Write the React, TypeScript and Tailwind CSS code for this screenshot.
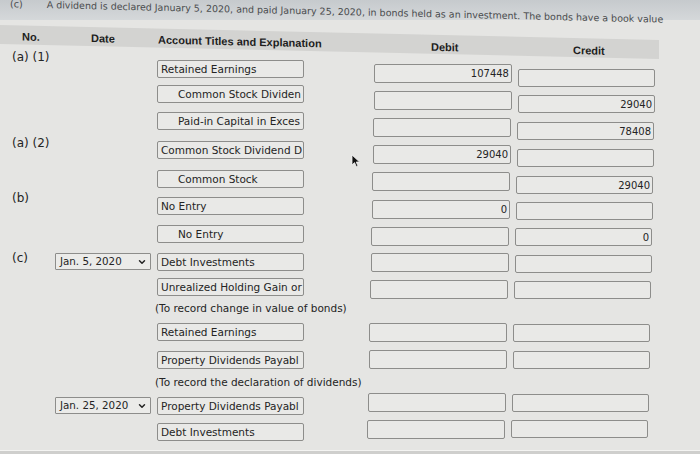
import React from "react";
import { ChevronDown } from "lucide-react";

type InputRow = {
  kind: "input";
  label?: string;
  labelCls?: string;
  date?: string;
  account: string;
  indent?: boolean;
  debit?: string;
  credit?: string;
  rowCls: string;
  debCls: string;
  credCls: string;
};
type TextRow = { kind: "text"; text: string; rowCls: string };
type Row = InputRow | TextRow;

const rows: Row[] = [
  { kind: "input", label: "(a) (1)", labelCls: "mt-[-10px]", account: "Retained Earnings", debit: "107448", rowCls: "h-[25px]", debCls: "ml-[70px] mt-[4px]", credCls: "mt-[9px]" },
  { kind: "input", account: "Common Stock Dividen", indent: true, credit: "29040", rowCls: "h-[27px]", debCls: "ml-[70px] mt-[6px]", credCls: "mt-[10px]" },
  { kind: "input", account: "Paid-in Capital in Exces", indent: true, credit: "78408", rowCls: "h-[29px]", debCls: "ml-[69px] mt-[6px]", credCls: "mt-[10px]" },
  { kind: "input", label: "(a) (2)", labelCls: "mt-[-5px]", account: "Common Stock Dividend D", debit: "29040", rowCls: "h-[29px]", debCls: "ml-[69px] mt-[4px]", credCls: "mt-[8px]" },
  { kind: "input", account: "Common Stock", indent: true, credit: "29040", rowCls: "h-[27px]", debCls: "ml-[68px] mt-[2px]", credCls: "mt-[6px]" },
  { kind: "input", label: "(b)", labelCls: "mt-[-6px]", account: "No Entry", debit: "0", rowCls: "h-[28px]", debCls: "ml-[68px] mt-[3px]", credCls: "mt-[5px]" },
  { kind: "input", account: "No Entry", indent: true, credit: "0", rowCls: "h-[28px]", debCls: "ml-[67px] mt-[2px]", credCls: "mt-[3px]" },
  { kind: "input", label: "(c)", labelCls: "mt-[-2px]", date: "Jan. 5, 2020", account: "Debt Investments", rowCls: "h-[25px]", debCls: "ml-[67px] mt-[0px]", credCls: "mt-[2px]" },
  { kind: "input", account: "Unrealized Holding Gain or", rowCls: "h-[22px]", debCls: "ml-[66px] mt-[2px]", credCls: "mt-[3px]" },
  { kind: "text", text: "(To record change in value of bonds)", rowCls: "h-[23px] pt-[1px]" },
  { kind: "input", account: "Retained Earnings", rowCls: "h-[28px]", debCls: "ml-[65px] mt-[0px]", credCls: "mt-[1px]" },
  { kind: "input", account: "Property Dividends Payabl", rowCls: "h-[23px]", debCls: "ml-[65px] mt-[-1px]", credCls: "mt-[0px]" },
  { kind: "text", text: "(To record the declaration of dividends)", rowCls: "h-[23px] pt-[1px]" },
  { kind: "input", date: "Jan. 25, 2020", account: "Property Dividends Payabl", rowCls: "h-[26px]", debCls: "ml-[64px] mt-[-4px]", credCls: "mt-[-3px]" },
  { kind: "input", account: "Debt Investments", rowCls: "h-[27px]", debCls: "ml-[63px] mt-[-3px]", credCls: "mt-[-3px]" },
];

function Box({ value, cls, num }: { value?: string; cls: string; num?: boolean }) {
  return (
    <div
      className={`${cls} shrink-0 overflow-hidden whitespace-nowrap rounded-[2px] border border-[#8d8d8b] bg-[#e9e9e7] ${
        num ? "pr-[2px] text-right text-[10px] leading-[17px]" : "text-[10.5px] leading-[16px]"
      }`}
    >
      {value ?? ""}
    </div>
  );
}

function DateSelect({ value }: { value: string }) {
  return (
    <div className="flex h-[17px] w-[96px] items-center justify-between rounded-[1px] border border-[#8d8d8b] bg-[#ebebe9] pl-[4px] pr-[3px] text-[10.3px] leading-[15px]">
      <span className="whitespace-nowrap">{value}</span>
      <ChevronDown size={10} strokeWidth={3.5} className="text-[#222]" />
    </div>
  );
}

export default function App() {
  return (
    <div className="relative h-[454px] w-[700px] overflow-hidden bg-[#e5e5e3] font-['DejaVu_Sans',sans-serif] text-[10.5px] text-[#242424]">
      {/* top strip with cut-off question text */}
      <div className="h-[25px] overflow-hidden">
        <div className="h-[20px] bg-gradient-to-b from-[#c6cacd] to-[#d5d8da]">
          <div className="flex origin-top-left skew-y-[1.35deg] gap-[24px] whitespace-nowrap pl-[10px] pt-[0px] text-[9.5px] leading-[12px] text-[#4a4c4e] -translate-y-[2px]">
            <span>(c)</span>
            <span>A dividend is declared January 5, 2020, and paid January 25, 2020, in bonds held as an investment. The bonds have a book value</span>
          </div>
        </div>
      </div>

      {/* header band */}
      <div className="flex h-[19px] w-[659px] origin-top-left skew-y-[1.3deg] items-center bg-[#d3d3d1] pt-[3px] font-['Liberation_Sans',sans-serif] text-[11px] font-bold text-[#1e1e1e]">
        <div className="w-[91px] pl-[22px]">No.</div>
        <div className="w-[67px]">Date</div>
        <div className="w-[273px] pt-[1px]">Account Titles and Explanation</div>
        <div className="w-[142px] pt-[2px]">Debit</div>
        <div className="pt-[3px]">Credit</div>
      </div>

      {/* rows */}
      <div className="mt-[16px] flex flex-col">
        {rows.map((r, i) =>
          r.kind === "text" ? (
            <div key={i} className={`${r.rowCls} whitespace-nowrap pl-[155px] leading-[14px]`}>
              {r.text}
            </div>
          ) : (
            <div key={i} className={`${r.rowCls} flex items-start`}>
              <div className={`w-[55px] shrink-0 whitespace-nowrap pl-[12px] text-[12px] leading-[14px] ${r.labelCls ?? ""}`}>
                {r.label ?? ""}
              </div>
              <div className="w-[102px] shrink-0">{r.date ? <DateSelect value={r.date} /> : null}</div>
              <Box value={r.account} cls={`h-[18px] w-[147px] ${r.indent ? "pl-[20px]" : "pl-[3px]"}`} />
              <Box value={r.debit} num cls={`h-[19px] w-[138px] ${r.debCls}`} />
              <Box value={r.credit} num cls={`ml-[6px] h-[18px] w-[137px] ${r.credCls}`} />
            </div>
          )
        )}
      </div>

      {/* page bottom edge */}
      <div className="absolute bottom-0 left-0 right-0 h-[4px] border-t border-[#f4f4f2] bg-[#cfcfcd]" />

      {/* mouse cursor */}
      <svg className="absolute left-[351px] top-[154px]" width="10" height="14" viewBox="0 0 10 14">
        <path d="M1 1 L1 11 L3.5 8.6 L5.4 12.8 L7 12.1 L5.2 8 L8.6 8 Z" fill="#111" stroke="#f2f2f2" strokeWidth="0.8" />
      </svg>
    </div>
  );
}
